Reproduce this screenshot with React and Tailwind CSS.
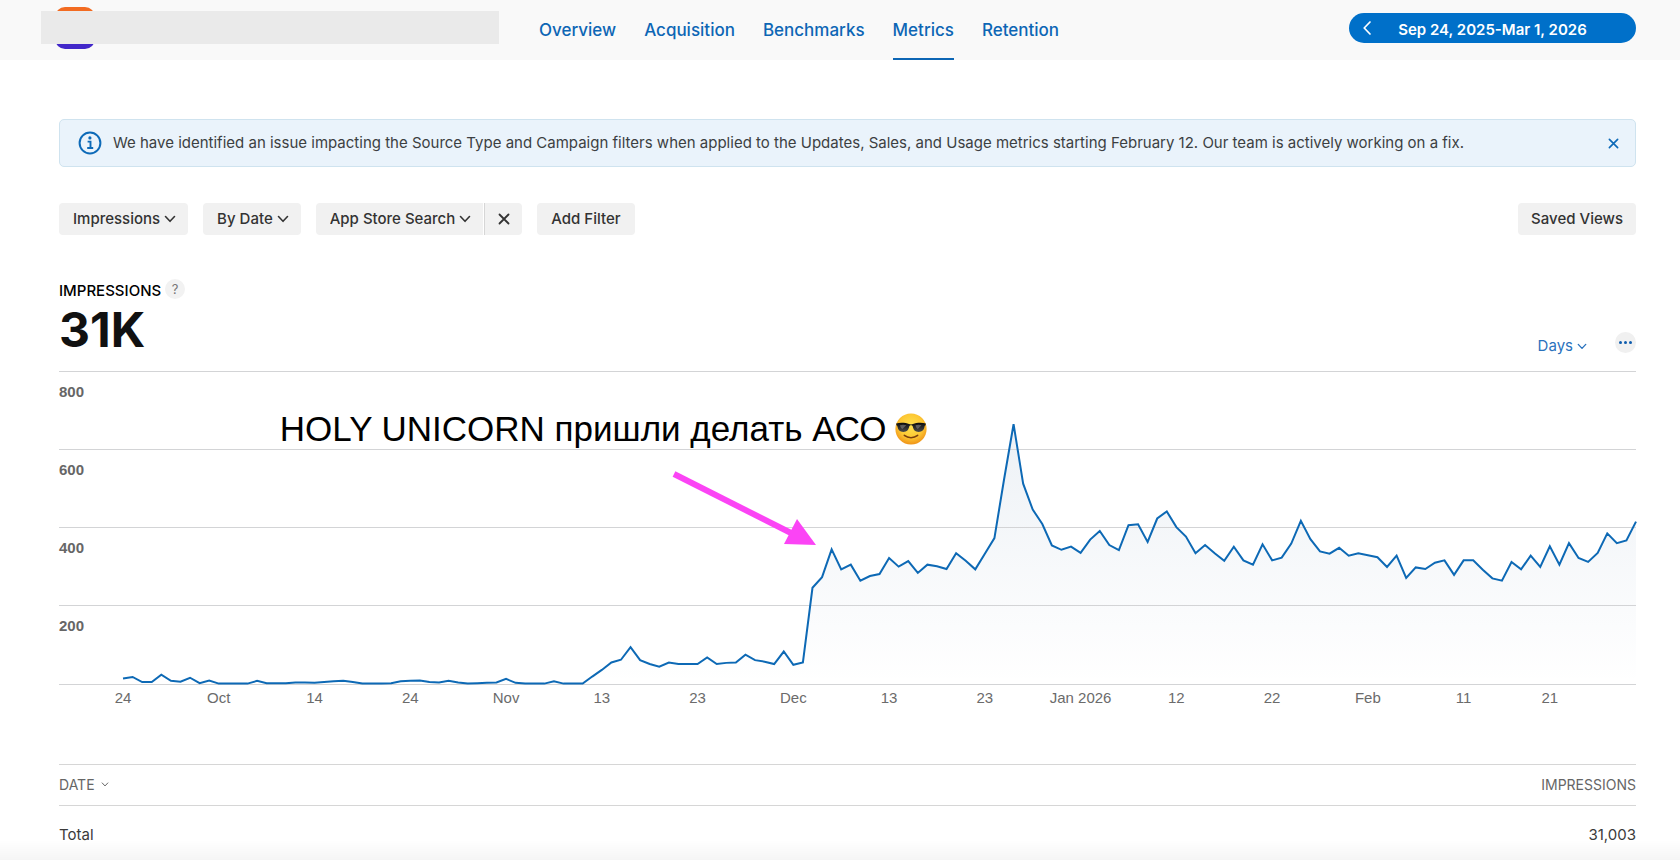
import React from 'react';

const TABS = ['Overview', 'Acquisition', 'Benchmarks', 'Metrics', 'Retention'];

// Daily impressions, Sep 24 to Mar 1
const DAILY = [
  14, 18, 5, 5, 24, 8, 6, 16, 2, 9,
  1, 1, 1, 1, 8, 2, 2, 2, 4, 4,
  3, 5, 7, 8, 5, 1, 1, 1, 2, 7,
  8, 9, 5, 4, 8, 4, 1, 2, 3, 4,
  13, 3, 1, 1, 1, 7, 1, 1, 1, 19,
  36, 55, 62, 94, 61, 51, 44, 55, 51, 51,
  51, 68, 51, 54, 55, 75, 61, 57, 51, 83,
  49, 55, 246, 273, 344, 293, 305, 264, 276, 281,
  322, 300, 314, 284, 305, 301, 294, 334, 315, 293,
  333, 373, 522, 664, 512, 446, 409, 354, 343, 351,
  335, 369, 391, 355, 342, 406, 408, 363, 423, 441,
  401, 377, 334, 355, 334, 315, 351, 316, 305, 357,
  316, 323, 359, 417, 370, 339, 333, 348, 328, 334,
  329, 324, 299, 328, 271, 298, 294, 310, 316, 279,
  316, 316, 292, 270, 264, 312, 293, 328, 299, 352,
  305, 360, 322, 312, 335, 385, 360, 367, 415,
];

const X_LABELS = [
  [0, '24'], [10, 'Oct'], [20, '14'], [30, '24'], [40, 'Nov'], [50, '13'], [60, '23'], [70, 'Dec'],
  [80, '13'], [90, '23'], [100, 'Jan 2026'], [110, '12'], [120, '22'], [130, 'Feb'], [140, '11'], [149, '21'],
];

const PLOT_HEIGHT = 313;
const DOMAIN = 800;
// Share of the chart's width left free for the y labels
const INSET = 4.06;

const dayToPercent = (day) => INSET + (day / (DAILY.length - 1)) * (100 - INSET);
const valueToY = (value) => PLOT_HEIGHT - (value / DOMAIN) * PLOT_HEIGHT;

function Chevron({ className = '' }) {
  return (
    <svg viewBox="0 0 12 8" className={className} fill="none" stroke="currentColor" strokeWidth="1.6" strokeLinecap="round" strokeLinejoin="round" aria-hidden="true">
      <path d="M1.5 1.5 6 6.3 10.5 1.5" />
    </svg>
  );
}

function Cross({ className = '' }) {
  return (
    <svg viewBox="0 0 12 12" className={className} fill="none" stroke="currentColor" strokeWidth="1.8" strokeLinecap="round" aria-hidden="true">
      <path d="M1.5 1.5l9 9M10.5 1.5l-9 9" />
    </svg>
  );
}

function FilterSelect({ label, value, className = '' }) {
  return (
    <label className="relative flex items-center">
      <span className="sr-only">{label}</span>
      <select defaultValue={value} className={`h-8 appearance-none field-sizing-content overflow-visible bg-[#f1f1f1] pl-3.5 pr-7 text-[15px] leading-6 font-medium text-[#333] ${className}`}>
        <option>{value}</option>
      </select>
      <Chevron className="pointer-events-none absolute right-3 h-2 w-3 text-[#333]" />
    </label>
  );
}

function Header() {
  return (
    <header className="flex h-15 items-center justify-between bg-[#f9f9f9] pl-[41px] pr-11">
      <div className="flex h-full items-center">
        <div className="relative mr-10 flex h-full w-[458px] items-center pl-[14px]">
          <div className="mb-1 h-[42px] w-10 rounded-[10px] bg-linear-to-b from-[#f26b21] from-50% to-[#4127c9] to-50%" />
          <div className="absolute inset-x-0 top-[11px] h-[33px] bg-[#eaeaea]" />
        </div>
        <nav className="flex h-full gap-7">
          {TABS.map((tab) => (
            <a
              key={tab}
              href={`#${tab.toLowerCase()}`}
              aria-current={tab === 'Metrics' ? 'page' : undefined}
              className={`flex h-full items-center border-b-2 pt-1 text-[17px] font-medium text-[#0d66b5] ${tab === 'Metrics' ? 'border-[#0d66b5]' : 'border-transparent'}`}
            >
              {tab}
            </a>
          ))}
        </nav>
      </div>
      <button type="button" className="relative mb-1 flex h-[30px] w-[287px] items-center justify-center rounded-full bg-[#0070c9] pt-1 text-[15px] font-semibold text-white">
        <svg viewBox="0 0 8 14" className="absolute top-2 left-[14px] h-[14px] w-2" fill="none" stroke="currentColor" strokeWidth="1.7" strokeLinecap="round" strokeLinejoin="round" aria-hidden="true">
          <path d="M7 1 1.2 7 7 13" />
        </svg>
        Sep 24, 2025-Mar 1, 2026
      </button>
    </header>
  );
}

function Notice() {
  return (
    <div role="status" className="flex h-12 items-center rounded-[5px] border border-[#cfe3ef] bg-[#eaf3fb] pl-[18px] pr-[14px]">
      <svg viewBox="0 0 24 24" className="h-6 w-6 shrink-0 text-[#0d6ab8]" fill="none" stroke="currentColor" aria-hidden="true">
        <circle cx="12" cy="12" r="10.4" strokeWidth="2" />
        <circle cx="11.9" cy="6.9" r="1.6" fill="currentColor" stroke="none" />
        <path d="M9.6 10.6h2.9v6.2M9.2 17h6" strokeWidth="1.9" />
      </svg>
      <p className="ml-[11px] flex-1 text-[15px] text-[#3c3f42]">
        We have identified an issue impacting the Source Type and Campaign filters when applied to the Updates, Sales, and Usage metrics starting February 12. Our team is actively working on a fix.
      </p>
      <button type="button" aria-label="Dismiss" className="p-0.5 text-[#0d6ab8]">
        <Cross className="h-[11px] w-[11px]" />
      </button>
    </div>
  );
}

function Filters() {
  return (
    <div className="mt-9 flex items-center gap-[15px]">
      <FilterSelect label="Metric" value="Impressions" className="rounded-[4px]" />
      <FilterSelect label="Group" value="By Date" className="rounded-[4px]" />
      <div className="flex gap-px">
        <FilterSelect label="Source" value="App Store Search" className="rounded-l-[4px]" />
        <button type="button" aria-label="Remove filter" className="flex h-8 w-[38px] items-center justify-center rounded-r-[4px] border-l border-[#d6d6d6] bg-[#f1f1f1] text-[#333]">
          <Cross className="h-3 w-3" />
        </button>
      </div>
      <button type="button" className="h-8 rounded-[4px] bg-[#f1f1f1] px-3.5 text-[15px] font-medium text-[#333]">Add Filter</button>
      <button type="button" className="ml-auto h-8 rounded-[4px] bg-[#f1f1f1] px-[13px] text-[15px] font-medium text-[#333]">Saved Views</button>
    </div>
  );
}

function Summary() {
  return (
    <div className="mt-11 flex h-[92px] items-end justify-between">
      <div className="h-full">
        <h1 className="flex items-center gap-1 text-[15px] leading-6 font-medium text-black">
          IMPRESSIONS
          <button type="button" aria-label="About impressions" className="mb-1 h-5 w-5 rounded-full bg-[#f2f2f2] text-[13px] leading-5 font-normal text-[#777]">?</button>
        </h1>
        <p className="mt-0.5 text-5xl leading-[50px] font-bold text-[#111]">31K</p>
      </div>
      <div className="flex items-center gap-7 pb-[13px]">
        <label className="relative flex items-center text-[#2a72bd]">
          <span className="sr-only">Interval</span>
          <select defaultValue="Days" className="appearance-none field-sizing-content overflow-visible pt-2 pr-3.5 text-[15px] leading-6">
            <option>Days</option>
          </select>
          <Chevron className="pointer-events-none absolute right-0 mt-2 h-[7px] w-2.5" />
        </label>
        <button type="button" aria-label="More" className="flex h-[21px] w-[21px] items-center justify-center gap-0.5 rounded-full bg-[#f0f0f0]">
          <span className="h-[3px] w-[3px] rounded-full bg-[#0d5cad]" />
          <span className="h-[3px] w-[3px] rounded-full bg-[#0d5cad]" />
          <span className="h-[3px] w-[3px] rounded-full bg-[#0d5cad]" />
        </button>
      </div>
    </div>
  );
}

function SunglassesFace() {
  return (
    <svg viewBox="0 0 32 32" className="h-8 w-8" aria-label="smiling face with sunglasses" role="img">
      <defs>
        <radialGradient id="face" cx="0.5" cy="0.4" r="0.62">
          <stop offset="0" stopColor="#ffe34d" />
          <stop offset="0.6" stopColor="#fdc834" />
          <stop offset="1" stopColor="#ee8f16" />
        </radialGradient>
        <linearGradient id="lens" x1="0" y1="0" x2="0" y2="1">
          <stop offset="0" stopColor="#0b0b0b" />
          <stop offset="1" stopColor="#4b4b4b" />
        </linearGradient>
      </defs>
      <circle cx="16" cy="16" r="15.6" fill="url(#face)" />
      <path d="M1.200 10.400c4-1.200 9.800-.8 12.800.7 1.300.5 2.700.5 4 0 3-1.500 8.800-1.900 12.800-.7l-.2 1.900c-.8.2-.9.700-1.100 1.500-.6 3.200-2.200 5.100-5.800 5.100-3.800 0-5.200-2.200-5.900-5.100-.2-1-.7-1.500-1.800-1.500s-1.600.5-1.800 1.500c-.7 2.900-2.100 5.100-5.900 5.100-3.600 0-5.200-1.900-5.800-5.100-.2-.8-.3-1.300-1.100-1.500z" fill="url(#lens)" />
      <path d="M5 12.300c2-.9 4.500-.8 6.300 0L7.300 16c-1.300-.8-1.900-2-2.300-3.700zM20.500 12.300c2-.9 4.300-.8 6 0L22.800 16c-1.200-.8-1.900-2-2.300-3.700z" fill="#8d8d8d" opacity=".55" />
      <path d="M9.300 22.300c3.900 3.100 9.500 3.100 13.400 0" fill="none" stroke="#7b3f0d" strokeWidth="1.500" strokeLinecap="round" />
    </svg>
  );
}

function Chart() {
  const line = DAILY.map((value, day) => `${day},${valueToY(value)}`).join(' ');
  const last = DAILY.length - 1;

  return (
    <div className="relative">
      <svg className="block h-[348px] w-full overflow-visible font-['Liberation_Sans',Arial,sans-serif] text-[15px]" role="img" aria-label="Impressions by day">
        <defs>
          <linearGradient id="area" gradientUnits="userSpaceOnUse" x1="0" y1="50" x2="0" y2={PLOT_HEIGHT}>
            <stop offset="0" stopColor="#1d4f88" stopOpacity="0.08" />
            <stop offset="1" stopColor="#1d4f88" stopOpacity="0" />
          </linearGradient>
        </defs>
        <svg x={`${INSET}%`} y="0" width={`${100 - INSET}%`} height={PLOT_HEIGHT} viewBox={`0 0 ${last} ${PLOT_HEIGHT}`} preserveAspectRatio="none">
          <polygon points={`0,${PLOT_HEIGHT} ${line} ${last},${PLOT_HEIGHT}`} fill="url(#area)" />
        </svg>
        {[800, 600, 400, 200, 0].map((value) => (
          <g key={value}>
            <rect x="0" y={Math.floor(valueToY(value))} width="100%" height="1" fill="#d3d4d6" />
            {value > 0 && <text x="0" y={Math.floor(valueToY(value)) + 26} fill="#666" fontWeight="bold">{value}</text>}
          </g>
        ))}
        <svg x={`${INSET}%`} y="0" width={`${100 - INSET}%`} height={PLOT_HEIGHT} viewBox={`0 0 ${last} ${PLOT_HEIGHT}`} preserveAspectRatio="none" className="overflow-visible">
          <polyline points={line} fill="none" stroke="#0d69b5" strokeWidth="2" vectorEffect="non-scaling-stroke" />
        </svg>
        {X_LABELS.map(([day, label]) => (
          <text key={day} x={`${dayToPercent(day)}%`} y="332" textAnchor="middle" fill="#6b6b6b">{label}</text>
        ))}
      </svg>
      <p className="absolute top-[38px] left-[14%] flex items-center gap-2 font-['Liberation_Sans',Arial,sans-serif] text-[35px] leading-10 whitespace-nowrap text-black">
        HOLY UNICORN пришли делать АСО
        <SunglassesFace />
      </p>
      <svg viewBox="0 0 146 78" className="absolute top-[99px] left-[38.8%] h-[78px] w-[146px]" aria-hidden="true">
        <path d="M3 4 122 64" stroke="#fb44f5" strokeWidth="6" />
        <path d="M126 49 145 75 113 74z" fill="#fb44f5" />
      </svg>
    </div>
  );
}

function TotalsTable() {
  return (
    <table className="mt-[45px] w-full text-[#3a3a3a]">
      <thead>
        <tr className="h-[41px] border-y border-[#d6d6d6] text-[14px] text-[#666]">
          <th scope="col" className="pb-0.5 text-left font-normal">
            <button type="button" className="flex items-center gap-1.5">
              DATE
              <Chevron className="h-[5px] w-2" />
            </button>
          </th>
          <th scope="col" className="pb-0.5 text-right font-normal">IMPRESSIONS</th>
        </tr>
      </thead>
      <tbody>
        <tr className="text-[15px] leading-5">
          <td className="pt-[19px]">Total</td>
          <td className="pt-[19px] text-right">31,003</td>
        </tr>
      </tbody>
    </table>
  );
}

export default function App() {
  return (
    <div className="min-h-screen bg-white font-['Inter',sans-serif]">
      <Header />
      <main className="pt-[59px] pr-11 pl-[59px]">
        <Notice />
        <Filters />
        <Summary />
        <Chart />
        <TotalsTable />
      </main>
      <div className="pointer-events-none fixed inset-x-0 bottom-0 h-5 bg-linear-to-b from-transparent to-black/4" />
    </div>
  );
}
